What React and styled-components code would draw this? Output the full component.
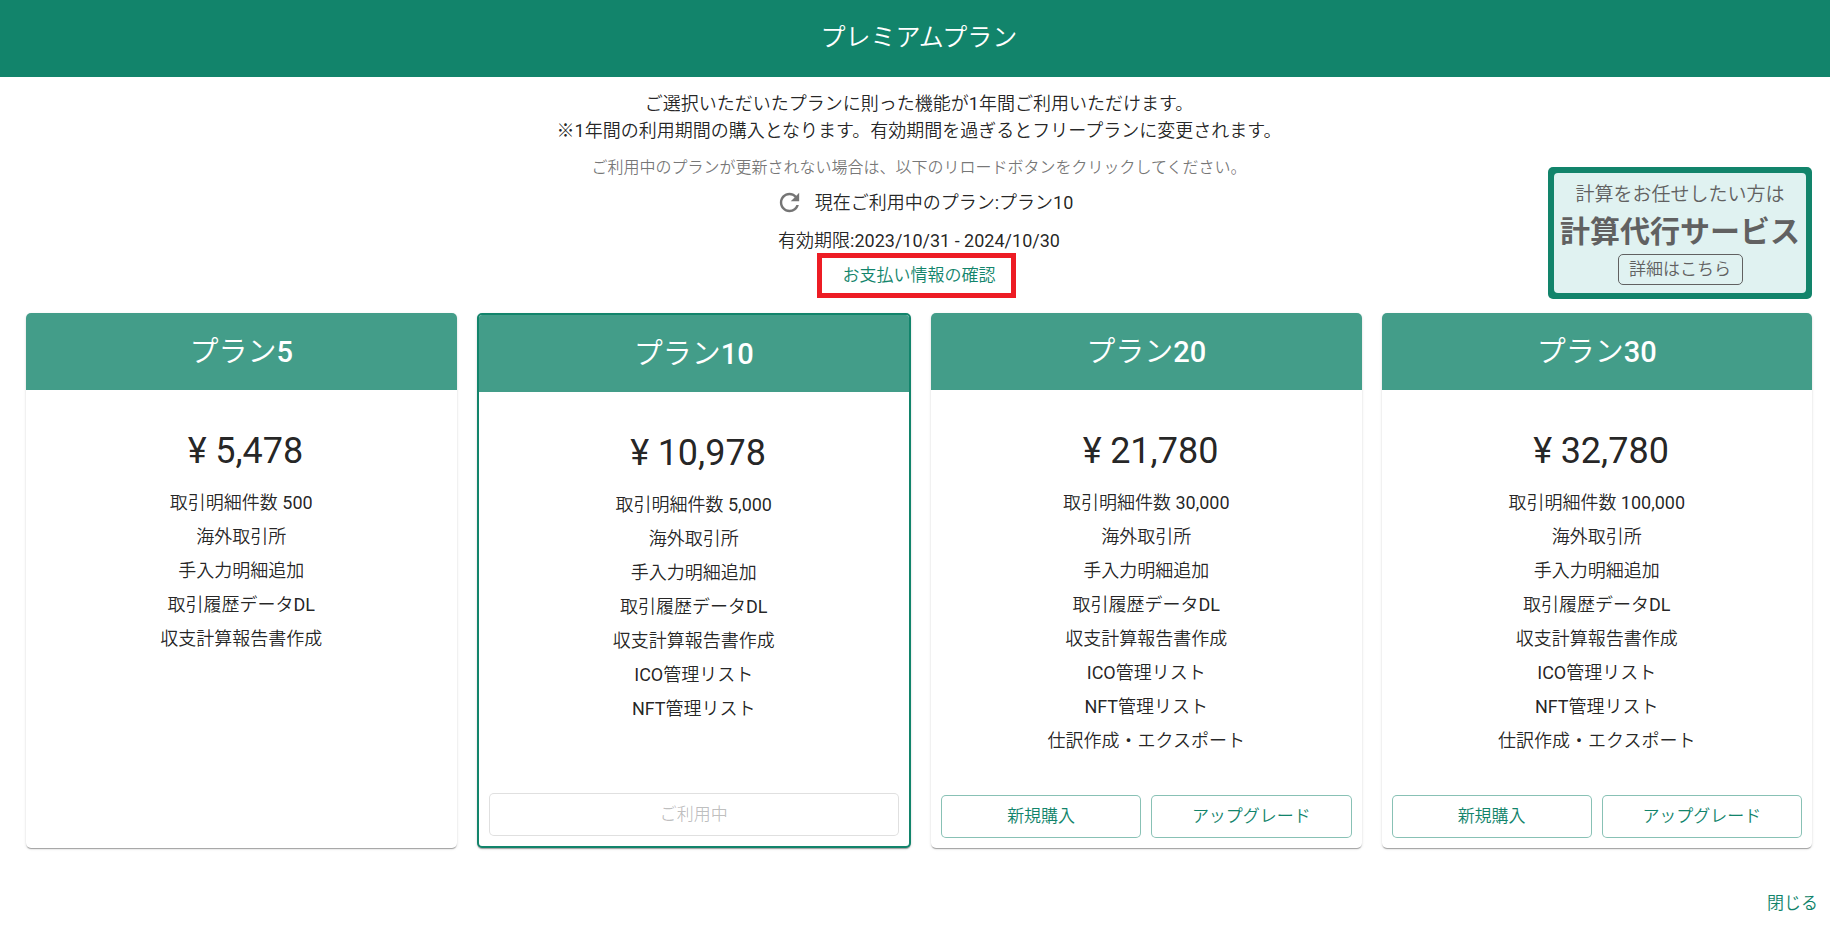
import React from 'react';
import styled, { createGlobalStyle } from 'styled-components';

const GlobalStyle = createGlobalStyle`
    *, *::before, *::after {
        box-sizing: border-box;
    }
    body {
        margin: 0;
        background: #fff;
        color: rgba(0,0,0,0.87);
        font-family: Roboto, "Noto Sans CJK JP DemiLight", "Noto Sans CJK JP Light", "Noto Sans CJK JP", sans-serif;
        font-size: 18px;
        line-height: 27px;
    }
    button {
        font-family: inherit;
        cursor: pointer;
    }
`
const Header = styled.header`
    display: flex;
    align-items: center;
    justify-content: center;
    height: 77px;
    padding: 0 18px 2px 26px;
    background: #12846b;
    color: #fff;
`
const Title = styled.h1`
    margin: 0;
    font-size: 25px;
    font-weight: 400;
    line-height: 36px;
`
const Content = styled.main`
    padding: 13px 18px 0 26px;
`
const Intro = styled.section`
    position: relative;
    display: flex;
    flex-direction: column;
    align-items: center;
    text-align: center;
    padding-bottom: 24px;
`
const Lead = styled.p`
    margin: 0;
`
const Note = styled.p`
    margin: 10px 0 8px;
    font-size: 16px;
    color: rgba(0,0,0,0.54);
`
const CurrentPlan = styled.div`
    display: flex;
    align-items: center;
    height: 26px;
`
const ReloadButton = styled.button`
    display: flex;
    align-items: center;
    justify-content: center;
    width: 50px;
    height: 26px;
    padding: 0;
    border: none;
    background: none;
    color: rgba(0,0,0,0.54);
`
const Period = styled.p`
    margin: 12px 0 8px;
`
const PaymentLink = styled.a`
    position: relative;
    font-size: 17px;
    color: #12846b;
    text-decoration: none;
    &::after {
        content: '';
        position: absolute;
        inset: -9px -20px -9px -26px;
        border: 5px solid #ed1c24;
    }
`
const Banner = styled.aside`
    position: absolute;
    right: 0;
    bottom: 14px;
    width: 264px;
    height: 132px;
    padding: 6px;
    border-radius: 5px;
    background: #12846b;
    color: #616161;
`
const BannerBody = styled.div`
    display: flex;
    flex-direction: column;
    align-items: center;
    height: 100%;
    padding-top: 7px;
    border-radius: 4px;
    background: #e0f2f1;
`
const BannerText = styled.span`
    font-size: 19px;
    line-height: 30px;
`
const BannerTitle = styled.strong`
    font-family: "Noto Sans CJK JP", sans-serif;
    font-size: 30px;
    font-weight: 700;
    line-height: 38px;
`
const BannerButton = styled.button`
    width: 125px;
    height: 31px;
    margin-top: 6px;
    padding: 0 0 2px;
    border: 1px solid #616161;
    border-radius: 5px;
    background: none;
    color: #616161;
    font-size: 17px;
    line-height: 24px;
`
const Plans = styled.section`
    display: flex;
    gap: 20px;
`
const Card = styled.article`
    flex: 1 1 0;
    display: flex;
    flex-direction: column;
    min-height: 535px;
    overflow: hidden;
    border: ${props => props.$current ? '2px solid #12846b' : 'none'};
    border-radius: 5px;
    background: #fff;
    box-shadow: 0 2px 1px -1px rgba(0,0,0,0.2), 0 1px 1px 0 rgba(0,0,0,0.14), 0 1px 3px 0 rgba(0,0,0,0.12);
`
const CardTitle = styled.h2`
    display: flex;
    align-items: center;
    justify-content: center;
    height: 77px;
    margin: 0;
    padding-top: 2px;
    background: #439d89;
    color: #fff;
    font-size: 29px;
    font-weight: 500;
`
const Price = styled.p`
    margin: 36px 0 10px;
    font-size: 36px;
    line-height: 50px;
    text-align: center;
`
const Yen = styled.span`
    display: inline-block;
    width: 1em;
    text-align: center;
`
const Features = styled.ul`
    flex: 1;
    margin: 0;
    padding: 0;
    list-style: none;
    line-height: 34px;
    text-align: center;
`
const Actions = styled.div`
    display: flex;
    gap: 10px;
    padding: 10px;
`
const ActionButton = styled.button`
    flex: 1;
    height: 43px;
    padding: 0 0 4px;
    border: 1px solid rgba(18,132,107,0.5);
    border-radius: 5px;
    background: #fff;
    color: #12846b;
    font-size: 17px;
    &:disabled {
        border-color: rgba(0,0,0,0.12);
        color: rgba(0,0,0,0.26);
        cursor: default;
    }
`
const Footer = styled.footer`
    display: flex;
    justify-content: flex-end;
    padding: 33px 12px 8px;
`
const CloseButton = styled.button`
    height: 40px;
    padding: 0;
    border: none;
    background: none;
    color: #12846b;
    font-size: 17px;
`

const features = [
    '海外取引所',
    '手入力明細追加',
    '取引履歴データDL',
    '収支計算報告書作成',
    'ICO管理リスト',
    'NFT管理リスト',
    '仕訳作成・エクスポート'
];

const plans = [
    { name: 'プラン5', price: '5,478', count: '500', features: features.slice(0, 4), actions: [] },
    { name: 'プラン10', price: '10,978', count: '5,000', features: features.slice(0, 6), actions: ['ご利用中'], current: true },
    { name: 'プラン20', price: '21,780', count: '30,000', features, actions: ['新規購入', 'アップグレード'] },
    { name: 'プラン30', price: '32,780', count: '100,000', features, actions: ['新規購入', 'アップグレード'] }
];

const RefreshIcon = () => (
    <svg width="29" height="29" viewBox="0 0 24 24" fill="currentColor" aria-hidden="true">
        <path d="M17.65 6.35C16.2 4.9 14.21 4 12 4c-4.42 0-7.99 3.58-7.99 8s3.57 8 7.99 8c3.73 0 6.84-2.55 7.73-6h-2.08c-.82 2.33-3.04 4-5.65 4-3.31 0-6-2.69-6-6s2.69-6 6-6c1.66 0 3.14.69 4.22 1.78L13 11h7V4l-2.35 2.35z" />
    </svg>
)

const PlanCard = ({ plan }) => (
    <Card $current={plan.current}>
        <CardTitle>{plan.name}</CardTitle>
        <Price><Yen>¥</Yen>{plan.price}</Price>
        <Features>
            <li>取引明細件数 {plan.count}</li>
            {plan.features.map((feature) => <li key={feature}>{feature}</li>)}
        </Features>
        {plan.actions.length > 0 && (
            <Actions>
                {plan.actions.map((action) => (
                    <ActionButton key={action} type="button" disabled={plan.current}>{action}</ActionButton>
                ))}
            </Actions>
        )}
    </Card>
)

const App = () => {
    return (
        <>
            <GlobalStyle />
            <Header>
                <Title>プレミアムプラン</Title>
            </Header>
            <Content>
                <Intro>
                    <Lead>ご選択いただいたプランに則った機能が1年間ご利用いただけます。</Lead>
                    <Lead>※1年間の利用期間の購入となります。有効期間を過ぎるとフリープランに変更されます。</Lead>
                    <Note>ご利用中のプランが更新されない場合は、以下のリロードボタンをクリックしてください。</Note>
                    <CurrentPlan>
                        <ReloadButton type="button" aria-label="リロード"><RefreshIcon /></ReloadButton>
                        <span>現在ご利用中のプラン:プラン10</span>
                    </CurrentPlan>
                    <Period>有効期限:2023/10/31 - 2024/10/30</Period>
                    <PaymentLink href="#payment">お支払い情報の確認</PaymentLink>
                    <Banner>
                        <BannerBody>
                            <BannerText>計算をお任せしたい方は</BannerText>
                            <BannerTitle>計算代行サービス</BannerTitle>
                            <BannerButton type="button">詳細はこちら</BannerButton>
                        </BannerBody>
                    </Banner>
                </Intro>
                <Plans>
                    {plans.map((plan) => <PlanCard key={plan.name} plan={plan} />)}
                </Plans>
            </Content>
            <Footer>
                <CloseButton type="button">閉じる</CloseButton>
            </Footer>
        </>
    )
}

export default App
